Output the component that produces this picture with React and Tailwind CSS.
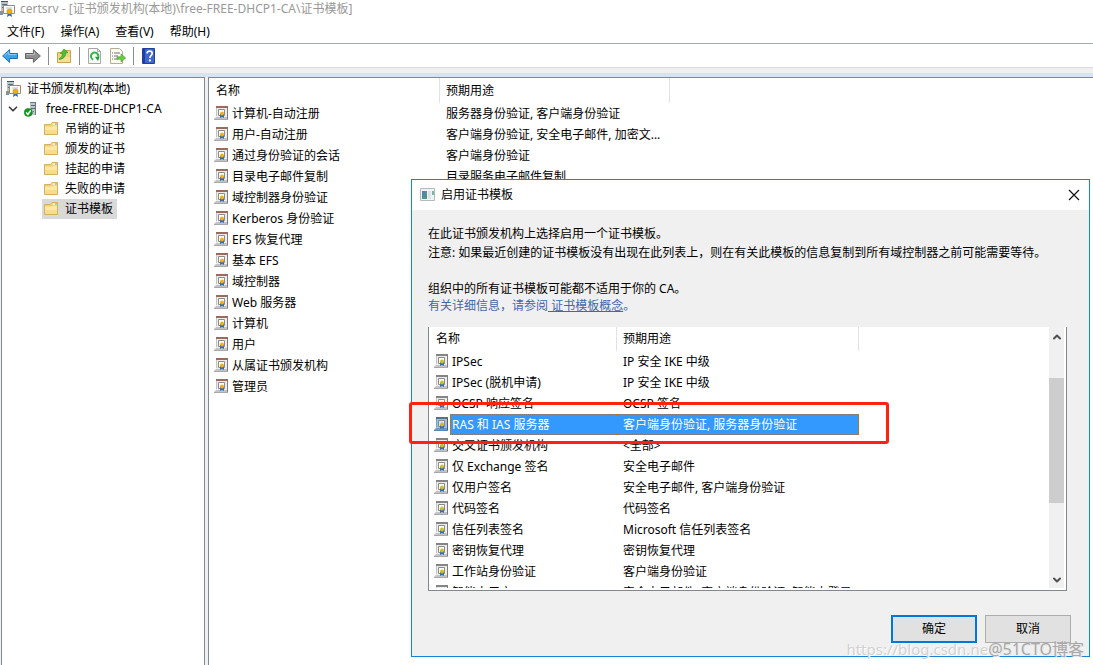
import React from "react";
import clsx from "clsx";
import { ChevronDown, ChevronUp } from "lucide-react";

const folders = [
  "吊销的证书",
  "颁发的证书",
  "挂起的申请",
  "失败的申请",
  "证书模板",
];

const templates = [
  { name: "计算机-自动注册", usage: "服务器身份验证, 客户端身份验证" },
  { name: "用户-自动注册", usage: "客户端身份验证, 安全电子邮件, 加密文..." },
  { name: "通过身份验证的会话", usage: "客户端身份验证" },
  { name: "目录电子邮件复制", usage: "目录服务电子邮件复制" },
  { name: "域控制器身份验证", usage: "" },
  { name: "Kerberos 身份验证", usage: "" },
  { name: "EFS 恢复代理", usage: "" },
  { name: "基本 EFS", usage: "" },
  { name: "域控制器", usage: "" },
  { name: "Web 服务器", usage: "" },
  { name: "计算机", usage: "" },
  { name: "用户", usage: "" },
  { name: "从属证书颁发机构", usage: "" },
  { name: "管理员", usage: "" },
];

const available = [
  { name: "IPSec", usage: "IP 安全 IKE 中级" },
  { name: "IPSec (脱机申请)", usage: "IP 安全 IKE 中级" },
  { name: "OCSP 响应签名", usage: "OCSP 签名" },
  { name: "RAS 和 IAS 服务器", usage: "客户端身份验证, 服务器身份验证" },
  { name: "交叉证书颁发机构", usage: "<全部>" },
  { name: "仅 Exchange 签名", usage: "安全电子邮件" },
  { name: "仅用户签名", usage: "安全电子邮件, 客户端身份验证" },
  { name: "代码签名", usage: "代码签名" },
  { name: "信任列表签名", usage: "Microsoft 信任列表签名" },
  { name: "密钥恢复代理", usage: "密钥恢复代理" },
  { name: "工作站身份验证", usage: "客户端身份验证" },
  { name: "智能卡用户", usage: "安全电子邮件, 客户端身份验证, 智能卡登录" },
];

const AuthorityIcon = () => (
  <svg className="size-4 shrink-0" viewBox="0 0 16 16">
    <path d="M1 0h7v12H1z" fill="#b9c3c8" />
    <path d="M1 0h7v1H1z" fill="#46555d" />
    <path d="M2 3h5v1H2zM2 6h2v1H2z" fill="#5d6d75" />
    <path d="M0 10h3v4H0z" fill="#84929a" />
    <path d="M3.500 4.500h11v8h-11z" fill="#fffdf5" stroke="#a98667" />
    <path d="M6 7h6" stroke="#b5c4d0" />
    <path d="M8 11l-1 5 2.500-1.500L12 16l-1-5z" fill="#2768b8" />
    <circle cx="9.500" cy="10.500" r="2.600" fill="#f2ac13" stroke="#c67c00" strokeWidth=".5" />
  </svg>
);

const ServerIcon = () => (
  <svg className="size-4 shrink-0" viewBox="0 0 16 16">
    <path d="M6 1h6v13H6z" fill="#bdc7cb" />
    <path d="M6 1h6v1H6zM11 2h1v12h-1z" fill="#657780" />
    <path d="M7 4h4v1H7zM7 7h4v1H7z" fill="#5a6b74" />
    <path d="M9 10h1v1H9z" fill="#43a047" />
    <circle cx="4.300" cy="11.400" r="4" fill="#169b22" stroke="#08750f" strokeWidth=".6" />
    <path d="M2.200 11.400l1.700 2 2.800-4" fill="none" stroke="#fff" strokeWidth="1.500" />
  </svg>
);

const FolderIcon = () => (
  <svg className="size-4 shrink-0" viewBox="0 0 16 16">
    <path d="M1.500 3.500h6l1.500-2h5.500v12h-13z" fill="#f1cf71" stroke="#d3b062" />
    <path d="M9.500 3h4.500" stroke="#fff" />
    <path d="M12 3h2" stroke="#6aa6d6" />
    <path d="M2 5.500h7l1-1h4v8.500H2z" fill="#fbe7a6" />
    <path d="M2 9h12v4H2z" fill="#f8dc8e" />
  </svg>
);

const TemplateIcon = ({ flat, selected }) => (
  <svg className="size-4 shrink-0" viewBox="0 0 16 16">
    <path d="M2 0h11v11H2z" fill={selected ? "#9dbfe0" : "#ededeb"} />
    <path d="M2 0h12v2H2z" fill={selected ? "#54728f" : flat ? "#858585" : "#9c6a5b"} />
    <path d="M13 1h1v13h-1z" fill={selected ? "#3f6288" : "#7b7b80"} />
    <path d="M2 2h1v8H2z" fill={selected ? "#7b9fc2" : "#c4c4c4"} />
    <path d="M2 11h11v2H0z" fill={selected ? "#6e9cc8" : "#c4c4c6"} />
    <path d="M0 13h14v1H0z" fill={selected ? "#5a86b2" : "#a9a9ab"} />
    <path d="M4.500 3.500h6v6h-6z" fill={selected ? "#cfe3f5" : "#fff"} stroke="#8b8b8b" />
    <path d="M6 8v4l2-1 2 1V8z" fill="#3a6cad" />
    <circle cx="8" cy="7.400" r="2" fill={flat ? "#c9c02a" : "#f4af17"} />
  </svg>
);

const BackIcon = () => (
  <svg className="size-4" viewBox="0 0 16 16">
    <path d="M.600 8l7-6.300v3.800h7.900v5H7.600v3.800z" fill="#37a5ea" stroke="#1d70ad" />
    <path d="M2.500 7.600l4.200-3.700v2.700H14.500" fill="none" stroke="#8dd3fa" />
  </svg>
);

const ForwardIcon = () => (
  <svg className="size-4" viewBox="0 0 16 16">
    <path d="M15.400 8l-7-6.300v3.800H.500v5h7.900v3.800z" fill="#8f8f8f" stroke="#636363" />
    <path d="M1.500 6.600h7.900V4" fill="none" stroke="#c0c0c0" />
  </svg>
);

const UpFolderIcon = () => (
  <svg className="size-4" viewBox="0 0 16 16">
    <path d="M1.500 4.500h6l2-2h5v12h-13z" fill="#f4d47a" stroke="#c9a452" />
    <path d="M2 9h12v5H2z" fill="#f8df96" />
    <path d="M3 10.500c2.500-1 3.300-2.500 3.500-5H4.300L8 1l4 3.700H9.800c0 4-2.500 6.300-6.300 6.800z" fill="#4cbf34" stroke="#2f8b22" strokeWidth=".6" />
  </svg>
);

const RefreshIcon = () => (
  <svg className="size-4" viewBox="0 0 16 16">
    <path d="M1.500.500h9l3 3v12h-12z" fill="#fafafa" stroke="#a7a7a7" />
    <path d="M10.500.500v3h3" fill="none" stroke="#a7a7a7" />
    <path d="M6.200 11.600A3.700 3.700 0 1 1 10.900 10" fill="none" stroke="#35b64a" strokeWidth="2" />
    <path d="M7.800 8.800l4.600.400-1.400 3.800z" fill="#23963a" />
  </svg>
);

const ExportIcon = () => (
  <svg className="size-4" viewBox="0 0 16 16">
    <path d="M.500.500h9l3 3v12h-12z" fill="#fffdf0" stroke="#b5af94" />
    <path d="M2 5h1M2 8h1M2 11h1M4 5h6M4 8h4M4 11h4" stroke="#6c6d80" />
    <path d="M7 8.800h4V6l4.700 4-4.700 4v-2.800H7z" fill="#68cc42" stroke="#40a028" strokeWidth=".6" />
  </svg>
);

const HelpIcon = () => (
  <svg className="size-4" viewBox="0 0 16 16">
    <path d="M1.500.500h12v15h-12z" fill="#3f66cf" stroke="#1c429b" />
    <path d="M2 1h2v14H2z" fill="#203f9b" />
    <path d="M6 5.400c.200-3 5.200-3 5.200 0 0 2-2.300 2.200-2.300 4.500" fill="none" stroke="#fff" strokeWidth="1.700" />
    <circle cx="8.900" cy="12.400" r="1.100" fill="#fff" />
  </svg>
);

const WindowIcon = () => (
  <svg className="size-4" viewBox="0 0 16 16">
    <path d="M.500 1.500h14v12H.500z" fill="#f1f4f5" stroke="#b3b9bc" />
    <path d="M2 4h5v8H2z" fill="#4f9488" />
    <path d="M2 4h3v5H2z" fill="#5585a9" />
    <path d="M8 4h3v8H8z" fill="#dce3e7" />
    <path d="M12 4h2v4h-2z" fill="#7fb79a" />
  </svg>
);

const ToolButton = ({ label, children }) => (
  <button type="button" aria-label={label} className="flex size-4 items-center justify-center">
    {children}
  </button>
);

const Separator = () => <div className="h-[18px] w-px bg-[#8c8c8c]" />;

const MainWindow = () => (
  <div className="flex min-h-screen flex-col">
    <header className="flex h-[18px] items-center gap-1 text-[#999999]">
      <AuthorityIcon />
      <h1>certsrv - [证书颁发机构(本地)\free-FREE-DHCP1-CA\证书模板]</h1>
    </header>
    <nav className="flex h-[26px] items-center gap-4 border-b border-[#a5a9ad] px-[7px] pt-[3px]">
      <button type="button">文件(F)</button>
      <button type="button">操作(A)</button>
      <button type="button">查看(V)</button>
      <button type="button">帮助(H)</button>
    </nav>
    <div className="flex h-6 items-center gap-[7px] border-b border-[#dcdcdc] px-0.5">
      <ToolButton label="后退"><BackIcon /></ToolButton>
      <ToolButton label="前进"><ForwardIcon /></ToolButton>
      <Separator />
      <ToolButton label="上一级"><UpFolderIcon /></ToolButton>
      <Separator />
      <ToolButton label="刷新"><RefreshIcon /></ToolButton>
      <ToolButton label="导出列表"><ExportIcon /></ToolButton>
      <Separator />
      <ToolButton label="帮助"><HelpIcon /></ToolButton>
    </div>
    <div className="h-[5px] bg-[#f0f0f0]" />
    <div className="h-1 bg-[#d6e3f1]" />
    <main className="flex grow gap-[3px] bg-[#f0f0f0] pl-px">
      <aside className="w-[204px] shrink-0 border border-b-0 border-[#828790] bg-white px-1 pt-px">
        <div className="flex h-5 items-center gap-[5px]">
          <AuthorityIcon />
          <span>证书颁发机构(本地)</span>
        </div>
        <div className="flex h-5 items-center gap-1">
          <ChevronDown className="size-3.5 text-[#404040]" strokeWidth={3} />
          <ServerIcon />
          <span className="pl-0.5">free-FREE-DHCP1-CA</span>
        </div>
        <ul className="pl-9">
          {folders.map((folder) => (
            <li key={folder} className="flex">
              <button
                type="button"
                className={clsx(
                  "flex h-5 items-center gap-1.5 pl-px pr-1",
                  folder === "证书模板" && "bg-[#d9d9d9]"
                )}
              >
                <FolderIcon />
                {folder}
              </button>
            </li>
          ))}
        </ul>
      </aside>
      <section className="min-w-0 grow border-l border-t border-[#828790] bg-white">
        <table className="w-full table-fixed border-separate border-spacing-0 text-left">
          <colgroup>
            <col className="w-[231px]" />
            <col className="w-[230px]" />
            <col />
          </colgroup>
          <thead>
            <tr className="h-[25px]">
              <th className="border-r border-[#e2e2e2] pl-[7px] font-normal">名称</th>
              <th className="border-r border-[#e2e2e2] pl-[6px] font-normal">预期用途</th>
              <td />
            </tr>
          </thead>
          <tbody>
            {templates.map((item) => (
              <tr key={item.name} className="h-[21px]">
                <td className="pl-[5px]">
                  <div className="flex items-center gap-0.5">
                    <TemplateIcon />
                    {item.name}
                  </div>
                </td>
                <td className="whitespace-nowrap pl-[6px]">{item.usage}</td>
                <td />
              </tr>
            ))}
          </tbody>
        </table>
      </section>
    </main>
  </div>
);

const TemplateList = () => (
  <div className="relative mt-[13px]">
    <div className="flex h-[264px] overflow-hidden border border-t-0 border-[#828790] bg-white pb-0.5 pr-0.5">
      <div className="min-w-0 grow overflow-hidden">
        <table className="w-full table-fixed border-separate border-spacing-0 text-left">
          <colgroup>
            <col className="w-[188px]" />
            <col className="w-[242px]" />
            <col />
          </colgroup>
          <thead>
            <tr className="h-[24px]">
              <th className="border-r border-[#e2e2e2] pl-[7px] font-normal">名称</th>
              <th className="border-r border-[#e2e2e2] pl-[6px] font-normal">预期用途</th>
              <td />
            </tr>
          </thead>
          <tbody>
            {available.map((item) => {
              const selected = item.name === "RAS 和 IAS 服务器";
              return (
                <tr key={item.name} className={clsx("h-[21px]", selected && "text-white")}>
                  <td className="pl-[5px]">
                    <div className="flex items-center">
                      <TemplateIcon flat selected={selected} />
                      <span
                        className={clsx(
                          "flex h-[21px] grow items-center pl-0.5",
                          selected &&
                            "border border-r-0 border-dotted border-[#cc6600] bg-[#3399ff] pl-px"
                        )}
                      >
                        {item.name}
                      </span>
                    </div>
                  </td>
                  <td>
                    <div
                      className={clsx(
                        "flex h-[21px] items-center whitespace-nowrap pl-[6px]",
                        selected &&
                          "border border-l-0 border-dotted border-[#cc6600] bg-[#3399ff]"
                      )}
                    >
                      {item.usage}
                    </div>
                  </td>
                  <td />
                </tr>
              );
            })}
          </tbody>
        </table>
      </div>
      <div className="flex w-[15px] shrink-0 flex-col items-center bg-[#f0f0f0] text-[#505050]">
        <ChevronUp className="my-1 size-3 shrink-0" strokeWidth={4} />
        <div className="mt-[31px] h-[125px] w-full shrink-0 bg-[#cdcdcd]" />
        <ChevronDown className="mb-0.5 mt-auto size-3 shrink-0" strokeWidth={4} />
      </div>
    </div>
    <div className="absolute -left-[19px] top-[75px] h-[42px] w-[480px] rounded-[3px] border-[3px] border-[#ff2211]" />
  </div>
);

const EnableDialog = () => (
  <div
    role="dialog"
    aria-label="启用证书模板"
    className="absolute left-[411px] right-[3px] top-[179px] border border-[#1883d7] bg-[#f0f0f0]"
  >
    <div className="flex h-[30px] items-center gap-[5px] bg-white pl-2 pr-[7px]">
      <WindowIcon />
      <h2>启用证书模板</h2>
      <button type="button" aria-label="关闭" className="ml-auto p-0.5">
        <svg className="size-3" viewBox="0 0 12 12">
          <path d="M1 1l10 10M11 1L1 11" stroke="#111" strokeWidth="1.200" />
        </svg>
      </button>
    </div>
    <div className="pb-[13px] pl-4 pr-[22px] pt-[14px]">
      <p className="leading-[19px]">在此证书颁发机构上选择启用一个证书模板。</p>
      <p className="whitespace-nowrap leading-[19px]">
        注意: 如果最近创建的证书模板没有出现在此列表上，则在有关此模板的信息复制到所有域控制器之前可能需要等待。
      </p>
      <p className="mt-[18px] leading-[17px]">组织中的所有证书模板可能都不适用于你的 CA。</p>
      <p className="leading-[17px] text-[#4466aa]">
        有关详细信息，请参阅
        <a href="#concept" className="whitespace-pre underline"> 证书模板概念</a>。
      </p>
      <TemplateList />
      <div className="-mr-1 mt-6 flex justify-end gap-2">
        <button type="button" className="h-7 w-[86px] border-2 border-[#0078d7] bg-[#e1e1e1]">
          确定
        </button>
        <button type="button" className="h-7 w-[86px] border border-[#adadad] bg-[#e1e1e1]">
          取消
        </button>
      </div>
    </div>
  </div>
);

const Watermark = () => (
  <div className="pointer-events-none absolute bottom-1.5 right-[9px] flex items-center">
    <span className="text-[15px] leading-5 text-[#d2d2d2] [text-shadow:1px_1px_0_#ffffff]">
      https://blog.csdn.ne
    </span>
    <span className="text-base leading-5 text-[#a8a8a8] [text-shadow:1px_1px_0_#e8e8e8]">
      @51CTO博客
    </span>
  </div>
);

const App = () => {
  return (
    <div className="relative min-h-screen overflow-hidden bg-white font-['Noto_Sans','Noto_Sans_CJK_SC',sans-serif] text-xs text-black">
      <MainWindow />
      <EnableDialog />
      <Watermark />
    </div>
  );
};

export default App;
